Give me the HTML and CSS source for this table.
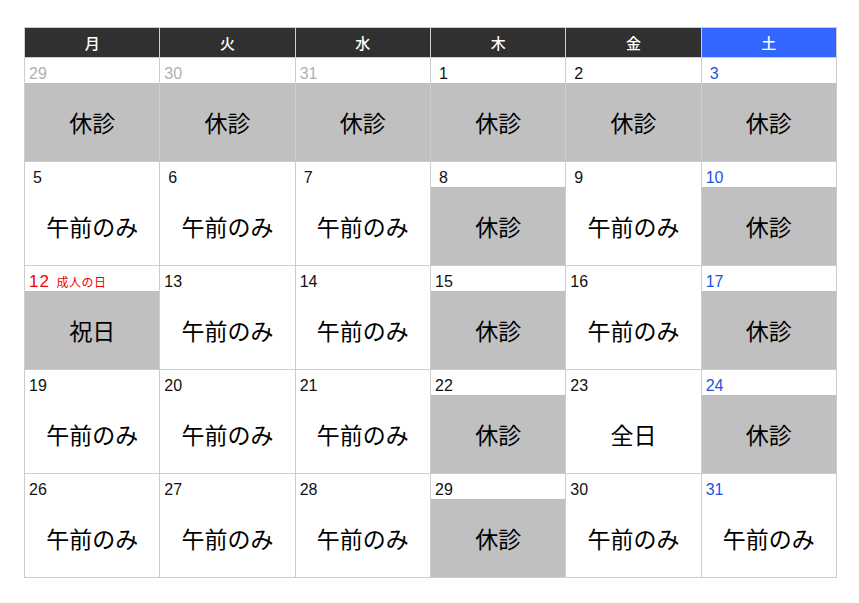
FILE: index.html
```html
<!DOCTYPE html>
<html lang="ja">
<head>
<meta charset="utf-8">
<title>診療カレンダー</title>
<link rel="stylesheet" href="styles.css">
</head>
<body>
<div class="wrap">
<table class="cal">
<thead>
<tr><th>月</th><th>火</th><th>水</th><th>木</th><th>金</th><th class="sat">土</th></tr>
</thead>
<tbody>
<tr>
<td><div class="d prev">29</div><div class="c off">休診</div></td>
<td><div class="d prev">30</div><div class="c off">休診</div></td>
<td><div class="d prev">31</div><div class="c off">休診</div></td>
<td><div class="d one">1</div><div class="c off">休診</div></td>
<td><div class="d one">2</div><div class="c off">休診</div></td>
<td><div class="d one blue">3</div><div class="c off">休診</div></td>
</tr>
<tr>
<td><div class="d one">5</div><div class="c">午前のみ</div></td>
<td><div class="d one">6</div><div class="c">午前のみ</div></td>
<td><div class="d one">7</div><div class="c">午前のみ</div></td>
<td><div class="d one">8</div><div class="c off">休診</div></td>
<td><div class="d one">9</div><div class="c">午前のみ</div></td>
<td><div class="d blue">10</div><div class="c off">休診</div></td>
</tr>
<tr>
<td><div class="d red"><span class="big">12</span> <span class="hol">成人の日</span></div><div class="c off">祝日</div></td>
<td><div class="d">13</div><div class="c">午前のみ</div></td>
<td><div class="d">14</div><div class="c">午前のみ</div></td>
<td><div class="d">15</div><div class="c off">休診</div></td>
<td><div class="d">16</div><div class="c">午前のみ</div></td>
<td><div class="d blue">17</div><div class="c off">休診</div></td>
</tr>
<tr>
<td><div class="d">19</div><div class="c">午前のみ</div></td>
<td><div class="d">20</div><div class="c">午前のみ</div></td>
<td><div class="d">21</div><div class="c">午前のみ</div></td>
<td><div class="d">22</div><div class="c off">休診</div></td>
<td><div class="d">23</div><div class="c">全日</div></td>
<td><div class="d blue">24</div><div class="c off">休診</div></td>
</tr>
<tr>
<td><div class="d">26</div><div class="c">午前のみ</div></td>
<td><div class="d">27</div><div class="c">午前のみ</div></td>
<td><div class="d">28</div><div class="c">午前のみ</div></td>
<td><div class="d">29</div><div class="c off">休診</div></td>
<td><div class="d">30</div><div class="c">午前のみ</div></td>
<td><div class="d blue">31</div><div class="c">午前のみ</div></td>
</tr>
</tbody>
</table>
</div>
</body>
</html>
```
FILE: styles.css
```css
html, body {
  margin: 0;
  padding: 0;
  background: #ffffff;
}
.wrap {
  padding: 27px 0 0 24px;
}
.cal {
  width: 813px;
  border-collapse: collapse;
  table-layout: fixed;
  font-family: "Liberation Sans", "Noto Sans CJK JP", sans-serif;
}
.cal th, .cal td {
  border: 1px solid #cdcdcd;
  padding: 0;
}
.cal th {
  height: 29px;
  background: #303030;
  color: #ffffff;
  font-family: "Noto Sans CJK JP", sans-serif;
  font-size: 15px;
  font-weight: 500;
  text-align: center;
}
.cal th.sat {
  background: #3366ff;
}
.d {
  height: 25px;
  box-sizing: border-box;
  padding: 6px 0 0 4px;
  line-height: 19px;
  font-size: 16px;
  color: #111111;
  white-space: nowrap;
}
.d.one {
  padding-left: 8px;
}
.d.prev {
  color: #b0b0b0;
}
.d.blue {
  color: #1a55e0;
}
.d.red {
  color: #ee0000;
}
.big {
  font-size: 17px;
  letter-spacing: 1px;
}
.hol {
  font-family: "Noto Sans CJK JP", sans-serif;
  font-size: 12px;
  letter-spacing: 0.5px;
  margin-left: 2px;
}
.c {
  height: 78px;
  display: flex;
  align-items: center;
  justify-content: center;
  font-family: "Noto Sans CJK JP", sans-serif;
  font-size: 23px;
  color: #000000;
}
.c.off {
  background: #c0c0c0;
}
```
